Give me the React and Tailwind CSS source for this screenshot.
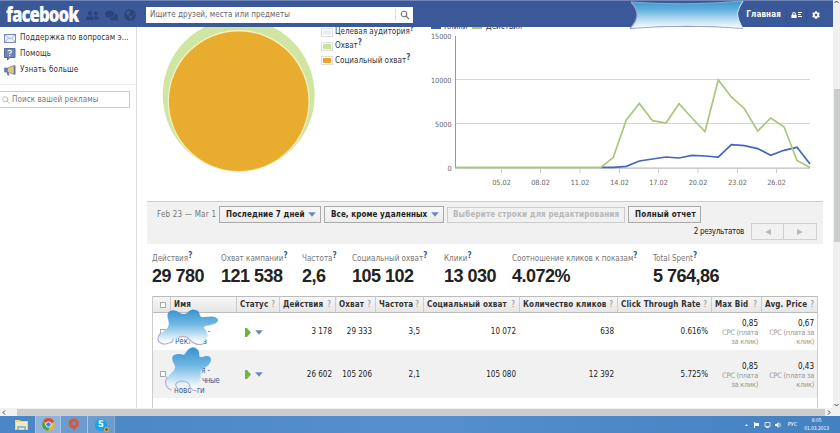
import React from "react";
import { FaUserFriends, FaComments, FaGlobeAmericas, FaCog, FaLock } from "react-icons/fa";

const STATS = [
  { label: "Действия", value: "29 780", width: "w-[69px]" },
  { label: "Охват кампании", value: "121 538", width: "w-[81px]" },
  { label: "Частота", value: "2,6", width: "w-[50px]" },
  { label: "Социальный охват", value: "105 102", width: "w-[92px]" },
  { label: "Клики", value: "13 030", width: "w-[68px]" },
  { label: "Соотношение кликов к показам", value: "4.072%", width: "w-[141px]" },
  { label: "Total Spent", value: "5 764,86", width: "w-[90px]" },
];

const COLUMNS = ["Статус", "Действия", "Охват", "Частота", "Социальный охват", "Количество кликов", "Click Through Rate", "Max Bid", "Avg. Price"];

const ROWS = [
  {
    values: ["3 178", "29 333", "3,5", "10 072", "638", "0.616%"],
    bid: "0,85",
    price: "0,67",
  },
  {
    values: ["26 602", "105 206", "2,1", "105 080", "12 392", "5.725%"],
    bid: "0,85",
    price: "0,43",
  },
];

const GRID = "grid grid-cols-[18px_66px_43px_56px_40px_48px_96px_98px_94px_50px_56px]";

const TICKS = [
  [501.5, "05.02"],
  [540.5, "08.02"],
  [580, "11.02"],
  [619.5, "14.02"],
  [658.5, "17.02"],
  [698, "20.02"],
  [737.5, "23.02"],
  [776.5, "26.02"],
];

const ACTIONS =
  "456,167.3 601,167.3 613.3,157.3 626.3,120 639.3,103.5 652.5,120.7 666,123 679,103.7 692,118 705,131.5 718.3,80 731.3,97 744.5,108.7 757.7,131.2 770.7,118 784,126.7 797,160.5 810,167.5";
const CLICKS =
  "601,167.3 613.3,167.3 626.3,166.3 639.3,161 652.5,159 666,157 679,158 692,155.3 705,156 718.3,157 731.3,144.6 744.5,145.6 757.7,148.6 770.7,155.2 784,150.3 797,147.3 810,164";

function Help() {
  return <sup className="relative -top-[3px] text-[8px] leading-none font-bold tracking-normal text-[#3b5998]">?</sup>;
}

function TopBar() {
  return (
    <header className="relative z-10 flex h-[27px] w-[833px] items-center border-t border-[#6d84b4] bg-[#3b5998]">
      <span className="ml-[6px] w-[80px] origin-left scale-x-[0.8] font-['Open_Sans',sans-serif] text-[21px] leading-[24px] font-extrabold tracking-[-1.2px] text-white">
        facebook
      </span>
      <div className="mt-[2px] flex w-[60px] items-center gap-[6px] text-[#2b4579]">
        <FaUserFriends size={13} />
        <FaComments size={13} />
        <FaGlobeAmericas size={12} />
      </div>
      <div className="mt-[1px] flex h-[16px] w-[267px] items-center justify-between bg-white">
        <span className="pl-[4px] text-[8px] tracking-[0.05px] text-[#666]">Ищите друзей, места или предметы</span>
        <span className="flex h-[12px] w-[18px] items-center justify-center border-l border-[#ddd]">
          <svg width="10" height="10" viewBox="0 0 10 10" fill="none" stroke="#777" strokeWidth="1.1">
            <circle cx="4" cy="4" r="2.8" />
            <path d="M6 6l3 3" />
          </svg>
        </span>
      </div>
      <div className="mt-[2px] ml-auto flex items-center text-white">
        <span className="text-[8px] font-bold tracking-[0.15px]">Главная</span>
        <span className="ml-[5px] flex h-[14px] w-[21px] items-center justify-center gap-px border-x border-[#334f8c]">
          <FaLock size={6} />
          <svg width="4" height="6" stroke="white" strokeWidth="1">
            <path d="M0 .5h4M0 2.5h3M0 4.5h4" />
          </svg>
        </span>
        <FaCog className="mr-[13px] ml-[5px]" size={8} />
      </div>
      <svg className="absolute -top-px left-[628px]" width="118" height="31" viewBox="0 0 118 31">
        <defs>
          <linearGradient id="banner" x1="0" y1="0" x2="0" y2="1">
            <stop offset="0" stopColor="#3f97cd" />
            <stop offset=".3" stopColor="#5eafdd" />
            <stop offset=".65" stopColor="#b3daf1" />
            <stop offset="1" stopColor="#fff" />
          </linearGradient>
        </defs>
        <path
          d="M3 2Q59 6 115 1Q110 9 109.500 14Q110 20 115 28.500Q59 24 2 28.500Q9 21 9 15Q9 8 3 2Z"
          fill="url(#banner)"
        />
        <path d="M3 2Q59 6 115 1" fill="none" stroke="#8fb4de" strokeWidth=".8" />
        <path d="M115 28.500Q59 24 2 28.500" fill="none" stroke="#a7a5c6" strokeWidth="1" />
        <path d="M2 28.500Q9 21 9 15Q9 8 3 2" fill="none" stroke="#93a5d2" strokeWidth="1.200" />
        <path d="M115 1Q110 9 109.500 14Q110 20 115 28.500" fill="none" stroke="#d5e8f8" strokeWidth="1" />
      </svg>
    </header>
  );
}

function Sidebar() {
  return (
    <aside className="w-[137px] shrink-0 border-r border-[#ddd] pt-[3px] text-[8px] text-[#333]">
      <div className="flex h-[16px] items-center gap-[4px] pl-[4px]">
        <svg width="12" height="9" viewBox="0 0 12 9">
          <rect x=".5" y=".5" width="11" height="8" fill="#eef2fa" stroke="#7189bd" />
          <path d="M1 1l5 4 5-4M1 8l3.500-4M11 8L7.500 4" fill="none" stroke="#8ba1cf" strokeWidth=".8" />
        </svg>
        <span className="tracking-[0.07px] whitespace-nowrap">Поддержка по вопросам э...</span>
      </div>
      <div className="flex h-[16px] items-center gap-[4px] pl-[4px]">
        <svg width="12" height="12" viewBox="0 0 12 12">
          <path d="M.5.500h10.500v9H6L3.500 12V9.500h-3z" fill="#6f86bb" stroke="#4f69a4" />
          <path d="M4 3.600Q4 2.200 5.700 2.200T7.400 3.700Q7.400 4.600 5.700 5.300V6.300M5.700 7v1.200" fill="none" stroke="#fff" strokeWidth="1.1" />
        </svg>
        <span className="tracking-[0.07px]">Помощь</span>
      </div>
      <div className="flex h-[16px] items-center gap-[4px] pl-[4px]">
        <svg width="12" height="11" viewBox="0 0 12 11">
          <path d="M.500 3h3v4h-3z" fill="#6982b5" stroke="#56699a" strokeWidth=".6" />
          <path d="M3.500 3L10 .600v8.800L3.500 7z" fill="#dfc78e" stroke="#8b7a57" strokeWidth=".7" />
          <path d="M10 .400h1.500v9H10z" fill="#6b7696" />
          <path d="M2.500 7h2l1 3.500h-2z" fill="#637cb2" />
        </svg>
        <span className="tracking-[0.12px]">Узнать больше</span>
      </div>
      <div className="mt-[6px] border-t border-[#eee]" />
      <div className="mt-[6px] flex h-[17px] w-[130px] items-center border border-l-0 border-[#ccc] text-[#777]">
        <svg className="mr-[2px] ml-[2px]" width="8" height="8" viewBox="0 0 8 8" fill="none" stroke="#bbb">
          <circle cx="3.200" cy="3.200" r="2.500" />
          <path d="M5 5l2.500 2.500" />
        </svg>
        <span className="tracking-[0.07px]">Поиск вашей рекламы</span>
      </div>
    </aside>
  );
}

function AudiencePie() {
  return (
    <svg className="shrink-0" width="184" height="174" viewBox="137 27 184 174">
      <circle cx="238.700" cy="95" r="76" fill="#cfe6a2" />
      <circle cx="238.700" cy="101" r="71" fill="#f9f0c4" />
      <circle cx="238.700" cy="101.200" r="69.800" fill="#e8ad2f" />
    </svg>
  );
}

function Legend() {
  const items = [
    ["Целевая аудитория", "bg-[#e8edf8]"],
    ["Охват", "bg-[#c8e29b]"],
    ["Социальный охват", "bg-[#e8a62a]"],
  ];
  return (
    <div className="-mt-[2px] w-[99px] shrink-0 text-[8px] text-[#333]">
      {items.map(([label, color]) => (
        <div key={label} className="flex h-[14.3px] items-center whitespace-nowrap">
          <span className="mr-[2px] h-[9px] w-[12px] border border-[#ddd] p-px">
            <span className={`block h-full ${color}`} />
          </span>
          <span>
            {label}
            <Help />
          </span>
        </div>
      ))}
    </div>
  );
}

function ActivityChart() {
  return (
    <svg className="shrink-0" width="413" height="174" viewBox="420 27 413 174" fontFamily="'DejaVu Sans Condensed', 'DejaVu Sans', sans-serif" fontSize="8">
      <rect x="431" y="22" width="10" height="7" fill="#3b5cab" />
      <text x="444" y="29" fill="#333">Клики</text>
      <rect x="472" y="22" width="10" height="7" fill="#a2c57b" />
      <text x="486" y="29" fill="#333">Действия</text>
      {[79.5, 123.5].map((y) => (
        <path key={y} d={`M456 ${y}H810`} stroke="#d6d6d6" />
      ))}
      <path d="M455.500 36V168" stroke="#999" />
      <path d="M455 168.200H810" stroke="#bbb" strokeWidth="1.300" />
      {[[39.3, "15000"], [82.5, "10000"], [126.5, "5000"], [171, "0"]].map(([y, label]) => (
        <text key={label} x="451.500" y={y} textAnchor="end" fill="#666" fontSize="7.200">
          {label}
        </text>
      ))}
      {TICKS.map(([x, label]) => (
        <g key={label}>
          <path d={`M${x} 168v5`} stroke="#ccc" />
          <text x={x} y="184.500" textAnchor="middle" fill="#666" fontSize="7.200">
            {label}
          </text>
        </g>
      ))}
      <polyline points={CLICKS} fill="none" stroke="#4467b8" strokeWidth="1.700" />
      <polyline points={ACTIONS} fill="none" stroke="#a9c77b" strokeWidth="1.700" />
    </svg>
  );
}

function Caret() {
  return (
    <svg className="shrink-0" width="8" height="5" viewBox="0 0 8 5">
      <path d="M.2.300h7.600L4 4.700z" fill="#6d88c0" />
    </svg>
  );
}

function FilterBar() {
  const button = "flex h-[17px] items-center justify-between border border-[#aaa] bg-linear-to-b from-[#f7f7f7] to-[#ececec] pr-[4px] pl-[6px] text-[8px] font-bold text-[#222] whitespace-nowrap";
  return (
    <section className="ml-[10px] h-[43px] w-[676px] border-t border-[#ccc] bg-[#f1f1f1] pt-[4px]">
      <div className="flex h-[17px] items-center">
        <span className="w-[72px] pl-[10px] text-[8px] tracking-[0.2px] whitespace-nowrap text-[#777]">Feb 23 — Mar 1</span>
        <div className={`${button} w-[102px] tracking-[0.12px]`}>
          Последние 7 дней
          <Caret />
        </div>
        <div className={`${button} ml-[3px] w-[120px] tracking-[0.08px]`}>
          Все, кроме удаленных
          <Caret />
        </div>
        <div className="ml-[3px] flex h-[16px] w-[178px] items-center border border-[#ccc] px-[5px] text-[8px] font-bold tracking-[0.13px] whitespace-nowrap text-[#b8b8b8]">
          Выберите строки для редактирования
        </div>
        <div className={`${button} ml-[3px] w-[73px] tracking-[0.2px]`}>Полный отчет</div>
      </div>
      <div className="flex h-[17px] items-center justify-end pr-[6px] text-[8px] text-[#222]">
        <span className="mr-[7px] tracking-[-0.3px]">2 результатов</span>
        <div className="flex h-[17px] w-[66px] border border-[#d0d0d0]">
          <span className="flex w-[32px] items-center justify-center border-r border-[#d0d0d0]">
            <svg width="6" height="6">
              <path d="M6 0v6L0 3z" fill="#bbb" />
            </svg>
          </span>
          <span className="flex flex-1 items-center justify-center">
            <svg width="6" height="6">
              <path d="M0 0v6l6-3z" fill="#bbb" />
            </svg>
          </span>
        </div>
      </div>
    </section>
  );
}

function Stats() {
  return (
    <section className="flex h-[52px] pt-[9px] pl-[15px]">
      {STATS.map((s) => (
        <div key={s.label} className={`${s.width} shrink-0 whitespace-nowrap`}>
          <div className="h-[12px] text-[8px] leading-[12px] text-[#777]">
            {s.label}
            <Help />
          </div>
          <div className="mt-[1px] font-['Liberation_Sans',Arial,sans-serif] text-[18px] leading-[21px] font-bold tracking-[-0.5px] text-[#222]">
            {s.value}
          </div>
        </div>
      ))}
    </section>
  );
}

function Checkbox() {
  return <span className="block h-[6px] w-[6px] border border-[#aaa] bg-white" />;
}

function Splash({ className, width, height, viewBox, d, tail }) {
  return (
    <svg className={`absolute ${className}`} width={width} height={height} viewBox={viewBox}>
      <defs>
        <linearGradient id="splash" x1="0" y1="0" x2="0" y2="1">
          <stop offset="0" stopColor="#3592cf" />
          <stop offset=".4" stopColor="#72b8e4" />
          <stop offset=".85" stopColor="#f4fafe" />
          <stop offset="1" stopColor="#fff" />
        </linearGradient>
      </defs>
      <path d={d} fill="url(#splash)" />
      <path d={tail} fill="none" stroke="#b3aed6" strokeWidth="1.200" strokeLinecap="round" />
    </svg>
  );
}

function Cost({ value, children }) {
  return (
    <div className="pt-[2px] pr-[4px] text-right text-[7.5px] leading-[9px] tracking-[-0.33px] text-[#999]">
      <div className="text-[8px] tracking-normal text-[#111]">{value}</div>
      {children}
    </div>
  );
}

function AdsTable() {
  return (
    <section className="relative ml-[15px] h-[112px] w-[666px] border-x border-[#ccc]">
      <div className={`${GRID} h-[17px] border-y border-[#bbb] bg-linear-to-b from-[#f7f7f7] to-[#e6e6e6] text-[8px] font-bold text-[#333]`}>
        <span className="flex items-center border-r border-[#ccc] pl-[7px]">
          <Checkbox />
        </span>
        <span className="flex items-center border-r border-[#ccc] pl-[3px] tracking-[0.2px]">Имя</span>
        {COLUMNS.map((name) => (
          <span key={name} className="flex items-center justify-between border-r border-[#ccc] pr-[4px] pl-[3px] tracking-[0.15px] whitespace-nowrap last:border-r-0">
            {name}
            <span className="text-[8px] font-normal tracking-normal text-[#888]">?</span>
          </span>
        ))}
      </div>
      {ROWS.map((row, i) => (
        <div key={row.bid + row.price} className={`${GRID} items-center text-[8px] text-[#222] ${i ? "h-[48px] bg-[#f1f1f1]" : "h-[37px]"}`}>
          <span className="pl-[7px]">
            <Checkbox />
          </span>
          <div className="leading-[10px] text-[#3b5998]">
            {i ? (
              <div className="pt-[13px]">
                <div className="pl-[30px]">я -</div>
                <div className="pl-[31px] tracking-[-0.5px]">чные</div>
                <div className="pl-[3px]">новости</div>
              </div>
            ) : (
              <div className="pt-[11px]">
                <div className="pl-[30px]">я -</div>
                <div className="pl-[4px]">Реклама</div>
              </div>
            )}
          </div>
          <span className="flex items-center gap-[4px] pt-px pl-[8px]">
            <svg width="6" height="9">
              <path d="M0 0l2 0 4 4.500-4 4.500H0z" fill="#6fb544" />
            </svg>
            <Caret />
          </span>
          {row.values.map((v) => (
            <span key={v} className="pt-px pr-[4px] text-right">
              {v}
            </span>
          ))}
          <Cost value={row.bid}>
            CPC (плата
            <br />
            за клик)
          </Cost>
          <Cost value={row.price}>
            CPC (плата за
            <br />
            клик)
          </Cost>
        </div>
      ))}
      <Splash
        className="top-[12px] left-[3px]"
        width={64}
        height={40}
        viewBox="156 308 64 40"
        d="M187 313Q192 307 198 311C201 314 198 318 205 317Q217 315 218 320C218 326 202 325 204 328Q210 335 206 339Q203 341 203 346Q196 348 191 344C187 335 181 337 174 339Q165 346 160 341C156 333 165 332 168 327C171 321 164 315 170 311Q175 309 180 313Q184 315 187 313Z"
        tail="M160 334C154 341 162 346 169 343Q174 342 173 339M179 337Q186 335 190 340Q196 346 203 344"
      />
      <Splash
        className="top-[49px] left-[11px]"
        width={50}
        height={50}
        viewBox="164 345 50 50"
        d="M187 351Q193 344 198 350C201 355 197 357 202 357Q211 354 211 360Q211 365 202 369C199 372 202 376 200 381Q197 385 197 394Q191 394 189 386C186 379 184 385 177 386Q169 389 167 380C167 374 176 372 175 366Q170 357 174 355Q179 353 184 355Z"
        tail="M167 377Q163 386 171 390M177 388Q173 382 182 381Q189 381 190 387Q192 391 197 391"
      />
    </section>
  );
}

function Taskbar() {
  return (
    <footer className="flex h-[17px] items-center bg-linear-to-r from-[#4a86c5] via-[#5590cc] to-[#4481c1] text-[7px] text-white">
      <div className="flex h-full items-center pl-[8px]">
        <span className="flex w-[27px] justify-center">
          <svg width="15" height="13" viewBox="0 0 15 13">
            <path d="M1 2h5l1 1h7v9H1z" fill="#edd684" />
            <path d="M2 4h11v7H2z" fill="#f7eab5" />
            <path d="M3 8h9v4H10V10H5v2H3z" fill="#83bfe0" />
          </svg>
        </span>
        <span className="flex h-full w-[26px] items-center justify-center border-x border-[#a7c6e6] bg-[#8fb3dd]">
          <svg width="13" height="13" viewBox="0 0 13 13">
            <circle cx="6.500" cy="6.500" r="6.300" fill="#e3b932" />
            <path d="M6.500 6.500L1 3.300A6.300 6.300 0 0 1 12.200 3.700z" fill="#d94b3a" />
            <path d="M1 3.300A6.300 6.300 0 0 0 6 12.800L8.500 7.500 4 7.500z" fill="#45a353" />
            <circle cx="6.500" cy="6.500" r="3" fill="#fff" />
            <circle cx="6.500" cy="6.500" r="2.300" fill="#4284d8" />
          </svg>
        </span>
        <span className="flex h-full w-[27px] items-center justify-center border-r border-[#a7c6e6] bg-[#6c9bcf]">
          <svg width="12" height="13" viewBox="0 0 12 13">
            <path d="M6 .5a5 5 0 0 1 2 9.500L5.500 13 5 10.500A5 5 0 0 1 6 .5z" fill="#d9573a" />
            <circle cx="6" cy="5.500" r="2" fill="#7291c0" />
          </svg>
        </span>
        <span className="flex h-full w-[27px] items-center justify-center border-r border-[#86aedb] bg-[#6c9bcf]">
          <span className="relative flex h-[12px] w-[12px] items-center justify-center rounded-full bg-[#18a5e5] text-[9px] font-bold">
            S
            <span className="absolute -right-[2px] -bottom-px h-[5px] w-[5px] rounded-full border border-[#e9bc3d] bg-[#8b5c24]" />
          </span>
        </span>
      </div>
      <div className="ml-auto flex items-center pr-[11px]">
        <svg className="mr-[7px]" width="36" height="8" viewBox="0 0 36 8" fill="#fff">
          <path d="M0 5l1.500-2L3 5zM9 1v6h1V5h4V2h-4V1z" />
          <path d="M20 1.500h5v4h-5zM21 6.500h3" fill="none" stroke="#d5e2f0" />
          <path d="M30 3h1.500L33.500 1v6L31.500 5H30z" />
          <path d="M35 2v4" stroke="#fff" strokeWidth=".8" />
        </svg>
        <span className="mr-[7px] text-[5.5px]">РУС</span>
        <div className="text-center text-[5px] leading-[7.500px] tracking-[-0.1px]">
          8:05
          <br />
          01.03.2013
        </div>
      </div>
    </footer>
  );
}

export default function App() {
  return (
    <div className="h-[433px] w-[840px] overflow-hidden bg-white font-['DejaVu_Sans_Condensed','DejaVu_Sans',sans-serif]">
      <div className="flex h-[416px]">
        <div className="w-[833px]">
          <TopBar />
          <div className="flex h-[381px] overflow-hidden">
            <Sidebar />
            <main className="w-[696px] shrink-0">
              <div className="flex h-[174px] overflow-hidden">
                <AudiencePie />
                <Legend />
                <ActivityChart />
              </div>
              <FilterBar />
              <Stats />
              <AdsTable />
            </main>
          </div>
          {/* horizontal scrollbar */}
          <div className="flex h-[8px] items-center justify-between bg-[#f0f0f0]">
            <svg className="ml-[2px]" width="4" height="5">
              <path d="M3 .500L1 2.500l2 2" fill="none" stroke="#444" />
            </svg>
            <div className="ml-[11px] h-[7px] flex-1 bg-[#cbcdcd]" />
            <svg className="mx-[2px]" width="4" height="5">
              <path d="M1 .500L3 2.500 1 4.500" fill="none" stroke="#444" />
            </svg>
          </div>
        </div>
        {/* vertical scrollbar */}
        <div className="flex w-[7px] flex-col items-center justify-between bg-[#f0f0f0]">
          <svg width="5" height="4">
            <path d="M.500 3L2.500 1l2 2" fill="none" stroke="#444" />
          </svg>
          <div className="mt-[85px] h-[153px] w-[6px] bg-[#cbcdcd]" />
          <svg className="mt-auto mb-[9px]" width="5" height="4">
            <path d="M.500 1L2.500 3l2-2" fill="none" stroke="#444" />
          </svg>
        </div>
      </div>
      <Taskbar />
    </div>
  );
}
